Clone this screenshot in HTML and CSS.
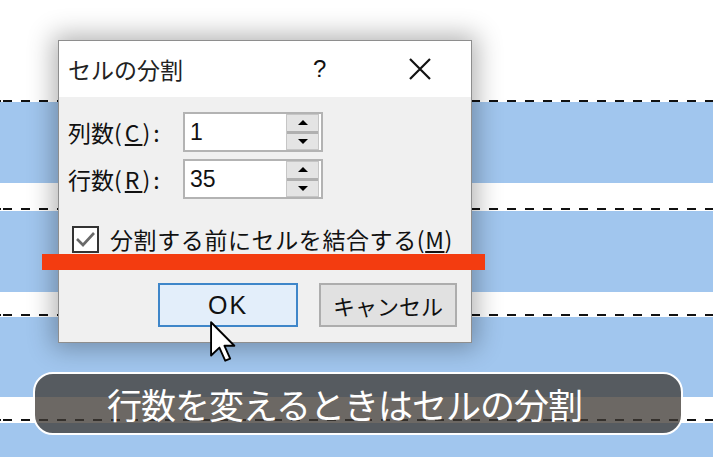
FILE: index.html
```html
<!DOCTYPE html>
<html lang="ja">
<head>
<meta charset="utf-8">
<title>セルの分割</title>
<link rel="stylesheet" href="styles.css">
</head>
<body>
<div class="stage">
  <div class="bg">
    <div class="white h100"></div>
    <div class="dash"></div>
    <div class="blue h81"></div>
    <div class="white h25"></div>
    <div class="dash"></div>
    <div class="white h1"></div>
    <div class="blue h81"></div>
    <div class="white h22"></div>
    <div class="dash"></div>
    <div class="white h1"></div>
    <div class="blue h80"></div>
    <div class="white h22"></div>
    <div class="dash"></div>
    <div class="white h2"></div>
    <div class="blue fill"></div>
  </div>

  <div class="dialog">
    <div class="titlebar">
      <span class="title">セルの分割</span>
      <span class="help">?</span>
      <svg class="close" viewBox="0 0 24 24" width="24" height="24"><path d="M2 2 L22 22 M22 2 L2 22" stroke="#111" stroke-width="2.2" fill="none"/></svg>
    </div>
    <div class="body">
      <div class="row">
        <span class="label">列数<span class="latin">(<u>C</u>):</span></span>
        <div class="spin-input">
          <span class="value">1</span>
          <div class="spinner">
            <div class="half"><span class="arrow-up"></span></div>
            <div class="sep"></div>
            <div class="half"><span class="arrow-down"></span></div>
          </div>
        </div>
      </div>
      <div class="row">
        <span class="label">行数<span class="latin">(<u>R</u>):</span></span>
        <div class="spin-input">
          <span class="value">35</span>
          <div class="spinner">
            <div class="half"><span class="arrow-up"></span></div>
            <div class="sep"></div>
            <div class="half"><span class="arrow-down"></span></div>
          </div>
        </div>
      </div>
      <div class="check-row">
        <span class="checkbox"><svg viewBox="0 0 23 23" width="23" height="23"><polyline points="3,11 9,17 20,5" stroke="#6a6a6a" stroke-width="2.6" fill="none"/></svg></span>
        <span class="check-label">分割する前にセルを結合する<span class="latin">(<u>M</u>)</span></span>
      </div>
      <div class="buttons">
        <div class="btn ok">OK</div>
        <div class="btn cancel">キャンセル</div>
      </div>
    </div>
  </div>

  <div class="redbar"></div>

  <svg class="cursor" viewBox="0 0 13 21" width="27" height="44">
    <path d="M1 1 L1 17 L5 13.2 L7.8 19.5 L10.2 18.5 L7.4 12.3 L12.2 12.3 Z" fill="#fff" stroke="#000" stroke-width="0.9" stroke-linejoin="round"/>
  </svg>

  <div class="caption"><span class="caption-text">行数を変えるときはセルの分割</span></div>
</div>
</body>
</html>
```

FILE: styles.css
```css
html, body {
  margin: 0;
  padding: 0;
}
body {
  font-family: "Noto Sans CJK JP", "Noto Sans", sans-serif;
  background: #fff;
}
.stage {
  position: relative;
  width: 713px;
  height: 457px;
  overflow: hidden;
}
.bg {
  display: flex;
  flex-direction: column;
  height: 457px;
}
.white { background: #fff; }
.blue { background: #a1c6ee; }
.h100 { height: 100px; }
.h81 { height: 81px; }
.h80 { height: 80px; }
.h25 { height: 25px; }
.h22 { height: 22px; }
.h2 { height: 2px; }
.h1 { height: 1px; }
.fill { flex: 1; }
.dash {
  height: 2px;
  background-color: #fff;
  background-image: repeating-linear-gradient(to right, #111 0, #111 9px, transparent 9px, transparent 18px);
  background-position: 3px 0;
}

/* dialog */
.dialog {
  position: absolute;
  left: 58px;
  top: 40px;
  width: 414px;
  height: 303px;
  box-sizing: border-box;
  border: 1px solid #8e8e8e;
  background: #f0f0f0;
  box-shadow: 0 0 24px 5px rgba(0, 0, 0, 0.3);
  display: flex;
  flex-direction: column;
  color: #111;
}
.titlebar {
  height: 56px;
  background: #fff;
  display: flex;
  align-items: center;
  padding-left: 9px;
  flex-shrink: 0;
}
.title {
  font-size: 23px;
  flex: 1;
  color: #222;
}
.help {
  font-size: 24px;
  width: 14px;
  margin-right: 81px;
  font-family: "Liberation Sans", sans-serif;
}
.close {
  margin-right: 39px;
  display: block;
}
.body {
  display: flex;
  flex-direction: column;
  padding: 15px 0 0 9px;
}
.row {
  display: flex;
  align-items: center;
  height: 40px;
  margin-bottom: 7px;
}
.label {
  width: 115px;
  font-size: 23px;
  line-height: 1;
}
.label .latin {
  letter-spacing: 3px;
}
.spin-input {
  width: 140px;
  height: 40px;
  box-sizing: border-box;
  border: 2px solid #b3b3b3;
  background: #fff;
  display: flex;
  align-items: center;
}
.value {
  flex: 1;
  padding-left: 5px;
  font-size: 23px;
  font-family: "Liberation Sans", sans-serif;
}
.spinner {
  width: 33px;
  height: 36px;
  margin-right: 2px;
  box-sizing: border-box;
  border: 1px solid #c6c6c6;
  background: #e4e4e4;
  display: flex;
  flex-direction: column;
}
.half {
  flex: 1;
  display: flex;
  align-items: center;
  justify-content: center;
}
.sep {
  height: 3px;
  background: #b0b0b0;
}
.arrow-up {
  width: 0;
  height: 0;
  border-left: 5px solid transparent;
  border-right: 5px solid transparent;
  border-bottom: 5px solid #000;
}
.arrow-down {
  width: 0;
  height: 0;
  border-left: 5px solid transparent;
  border-right: 5px solid transparent;
  border-top: 5px solid #000;
}
.check-row {
  display: flex;
  align-items: center;
  margin-top: 19px;
  padding-left: 4px;
  height: 28px;
}
.checkbox {
  width: 27px;
  height: 27px;
  box-sizing: border-box;
  border: 2px solid #333;
  background: #fff;
  display: flex;
  align-items: center;
  justify-content: center;
}
.check-label {
  margin-left: 11px;
  font-size: 23px;
  letter-spacing: 0.6px;
  line-height: 1;
  white-space: nowrap;
}
.buttons {
  display: flex;
  margin-top: 30px;
  padding-left: 90px;
  gap: 21px;
}
.btn {
  height: 44px;
  box-sizing: border-box;
  display: flex;
  align-items: center;
  justify-content: center;
  font-size: 22px;
}
.ok {
  width: 140px;
  border: 2px solid #3f86c9;
  background: #e3eefa;
  font-family: "Liberation Sans", sans-serif;
  font-size: 25px;
  letter-spacing: 2px;
}
.cancel {
  width: 138px;
  border: 2px solid #adadad;
  background: #e1e1e1;
}

/* overlays */
.redbar {
  position: absolute;
  left: 42px;
  top: 254px;
  width: 443px;
  height: 16px;
  background: #f33c10;
}
.cursor {
  position: absolute;
  left: 209px;
  top: 320px;
}
.caption {
  position: absolute;
  left: 33px;
  top: 372px;
  width: 650px;
  height: 63px;
  box-sizing: border-box;
  border: 2px solid #fff;
  border-radius: 20px;
  background: rgba(64, 58, 53, 0.77);
  display: flex;
  align-items: center;
  padding-left: 72px;
}
.caption-text {
  color: #fff;
  font-size: 35px;
  letter-spacing: -1px;
  line-height: 1;
  white-space: nowrap;
}
```
